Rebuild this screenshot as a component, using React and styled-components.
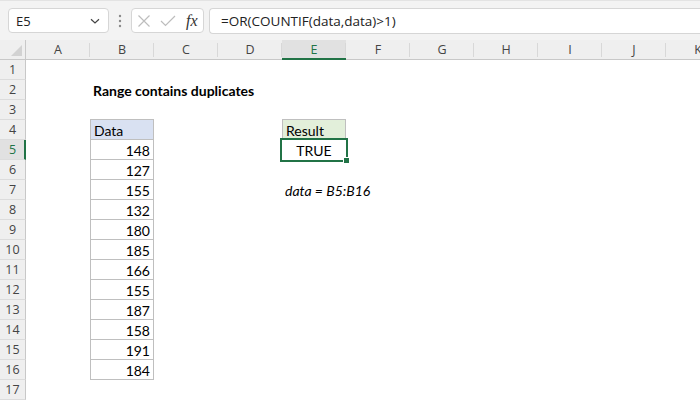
import React from "react";
import styled, { createGlobalStyle } from "styled-components";

const GlobalStyle = createGlobalStyle`
  html, body {
    margin: 0;
    padding: 0;
    background: #ffffff;
  }
  body {
    width: 700px;
    height: 400px;
    overflow: hidden;
  }
`;

const COLS = ["A", "B", "C", "D", "E", "F", "G", "H", "I", "J", "K"];
const ROW_COUNT = 17;
const GRID = "26px repeat(11, 64px)";

// данные таблицы
const values = [148, 127, 155, 132, 180, 185, 166, 155, 187, 158, 191, 184];

const Sheet = styled.div`
  width: 700px;
  height: 400px;
  overflow: hidden;
  display: flex;
  flex-direction: column;
  background: #ffffff;
  font-family: Lato, "Liberation Sans", sans-serif;
`;

// Верхняя панель с полем имени и строкой формул
const TopBar = styled.div`
  height: 40px;
  flex: none;
  display: flex;
  align-items: center;
  padding-left: 8px;
  background: #f3f3f3;
  border-top: 1px solid #e3e3e3;
  box-sizing: border-box;
`;

const NameBox = styled.div`
  width: 101px;
  height: 25px;
  box-sizing: border-box;
  background: #ffffff;
  border: 1px solid #d6d6d6;
  border-radius: 4px;
  display: flex;
  align-items: center;
  justify-content: space-between;
  padding: 0 7px 0 7px;
  font-family: "Open Sans", sans-serif;
  font-size: 13px;
  color: #222;
`;

const Dots = styled.div`
  width: 22px;
  display: flex;
  justify-content: center;
`;

const FxBox = styled.div`
  width: 73px;
  height: 25px;
  box-sizing: border-box;
  background: #ffffff;
  border: 1px solid #d6d6d6;
  border-radius: 4px;
  display: flex;
  align-items: center;
  gap: 9px;
  padding-left: 5px;
`;

const FxLabel = styled.span`
  font-family: "Liberation Serif", serif;
  font-style: italic;
  font-size: 16px;
  color: #333;
  margin-left: 1px;
`;

const FormulaInput = styled.div`
  flex: 1;
  height: 26px;
  margin-left: 5px;
  box-sizing: border-box;
  background: #ffffff;
  border: 1px solid #d6d6d6;
  border-right: none;
  border-radius: 4px 0 0 4px;
  display: flex;
  align-items: center;
  padding-left: 11px;
  font-family: "Open Sans", sans-serif;
  font-size: 13.5px;
  color: #222;
`;

const Row = styled.div`
  display: grid;
  grid-template-columns: ${GRID};
  height: ${(p) => p.$h || 20}px;
  flex: none;
`;

const Corner = styled.div`
  position: relative;
  background: #efefef;
  border-right: 1px solid #c8c8c8;
  border-bottom: 1px solid #c8c8c8;
  box-sizing: border-box;
  overflow: hidden;
  &::after {
    content: "";
    position: absolute;
    right: 3px;
    bottom: 3px;
    border-style: solid;
    border-width: 0 0 11px 11px;
    border-color: transparent transparent #d2d2d2 transparent;
  }
`;

const ColHead = styled.div`
  position: relative;
  display: flex;
  align-items: center;
  justify-content: center;
  box-sizing: border-box;
  background: ${(p) => (p.$active ? "#e1e1e1" : "#efefef")};
  border-bottom: ${(p) => (p.$active ? "2px solid #217346" : "1px solid #c8c8c8")};
  color: ${(p) => (p.$active ? "#217346" : "#444")};
  font-family: "Open Sans", sans-serif;
  font-size: 12.5px;
  padding-top: ${(p) => (p.$active ? "1px" : "0")};
  &::after {
    content: "";
    position: absolute;
    right: 0;
    top: 3px;
    bottom: 2px;
    width: 1px;
    background: #d8d8d8;
  }
`;

const RowHead = styled.div`
  display: flex;
  align-items: center;
  justify-content: center;
  box-sizing: border-box;
  background: ${(p) => (p.$active ? "#e1e1e1" : "#efefef")};
  border-right: ${(p) => (p.$active ? "2px solid #217346" : "1px solid #c8c8c8")};
  border-bottom: 1px solid #dcdcdc;
  color: ${(p) => (p.$active ? "#217346" : "#444")};
  font-family: "Open Sans", sans-serif;
  font-size: 12.5px;
  padding-left: ${(p) => (p.$active ? "1px" : "0")};
`;

const Cell = styled.div`
  position: relative;
  box-sizing: border-box;
  display: flex;
  align-items: center;
  justify-content: ${(p) =>
    p.$align === "right" ? "flex-end" : p.$align === "center" ? "center" : "flex-start"};
  padding: 1px 3px 0 3px;
  white-space: nowrap;
  font-size: 14px;
  color: #000;
  background: ${(p) => p.$fill || "transparent"};
  font-weight: ${(p) => (p.$bold ? 700 : 400)};
  font-style: ${(p) => (p.$italic ? "italic" : "normal")};
  border-left: ${(p) => (p.$boxed ? "1px solid #bfbfbf" : "none")};
  border-right: ${(p) => (p.$boxed ? "1px solid #bfbfbf" : "none")};
  border-bottom: ${(p) => (p.$boxed ? "1px solid #bfbfbf" : "none")};
  border-top: ${(p) => (p.$top ? "1px solid #bfbfbf" : "none")};
  margin-top: ${(p) => (p.$top ? "-1px" : "0")};
  overflow: visible;
  z-index: ${(p) => (p.$overflow ? 1 : 0)};
`;

const Selection = styled.div`
  position: absolute;
  left: -2px;
  top: -2px;
  right: -2px;
  bottom: -2px;
  border: 2px solid #217346;
  pointer-events: none;
  z-index: 2;
  &::after {
    content: "";
    position: absolute;
    right: -4px;
    bottom: -4px;
    width: 5px;
    height: 5px;
    background: #217346;
    border: 1px solid #ffffff;
  }
`;

const ChevronIcon = () => (
  <svg width="12" height="12" viewBox="0 0 12 12">
    <path d="M2 4.2 L6 8 L10 4.2" fill="none" stroke="#444" strokeWidth="1.2" />
  </svg>
);

const DotsIcon = () => (
  <svg width="4" height="14" viewBox="0 0 4 14">
    <circle cx="2" cy="2" r="1.2" fill="#8a8a8a" />
    <circle cx="2" cy="7" r="1.2" fill="#8a8a8a" />
    <circle cx="2" cy="12" r="1.2" fill="#8a8a8a" />
  </svg>
);

const CrossIcon = () => (
  <svg width="14" height="14" viewBox="0 0 14 14">
    <path d="M1.5 1.5 L12.5 12.5 M12.5 1.5 L1.5 12.5" stroke="#bdbdbd" strokeWidth="1.2" fill="none" />
  </svg>
);

const CheckIcon = () => (
  <svg width="16" height="14" viewBox="0 0 16 14">
    <path d="M1 7 L5.5 11.5 L15 2" stroke="#bdbdbd" strokeWidth="1.2" fill="none" />
  </svg>
);

function cellFor(r, c) {
  // r — номер строки (1..17), c — буква столбца
  if (r === 2 && c === "B") return { text: "Range contains duplicates", bold: true };
  if (c === "B" && r === 4) return { text: "Data", boxed: true, top: true, fill: "#d9e1f2" };
  if (c === "B" && r >= 5 && r <= 16)
    return { text: values[r - 5], boxed: true, align: "right" };
  if (c === "E" && r === 4) return { text: "Result", boxed: true, top: true, fill: "#e2efda" };
  if (c === "E" && r === 5) return { text: "TRUE", align: "center", selected: true };
  if (c === "E" && r === 7) return { text: "data = B5:B16", italic: true };
  return null;
}

export default function App() {
  const rows = Array.from({ length: ROW_COUNT }, (_, i) => i + 1);

  return (
    <Sheet>
      <GlobalStyle />
      <TopBar>
        <NameBox>
          <span>E5</span>
          <ChevronIcon />
        </NameBox>
        <Dots>
          <DotsIcon />
        </Dots>
        <FxBox>
          <CrossIcon />
          <CheckIcon />
          <FxLabel>fx</FxLabel>
        </FxBox>
        <FormulaInput>=OR(COUNTIF(data,data)&gt;1)</FormulaInput>
      </TopBar>

      <Row $h={20}>
        <Corner />
        {COLS.map((c) => (
          <ColHead key={c} $active={c === "E"}>
            {c}
          </ColHead>
        ))}
      </Row>

      {rows.map((r) => (
        <Row key={r}>
          <RowHead $active={r === 5}>{r}</RowHead>
          {COLS.map((c) => {
            const cell = cellFor(r, c);
            if (!cell) return <Cell key={c} />;
            return (
              <Cell
                key={c}
                $align={cell.align}
                $bold={cell.bold}
                $italic={cell.italic}
                $boxed={cell.boxed}
                $top={cell.top}
                $fill={cell.fill}
                $overflow={!cell.boxed}
              >
                {cell.text}
                {cell.selected && <Selection />}
              </Cell>
            );
          })}
        </Row>
      ))}
    </Sheet>
  );
}
